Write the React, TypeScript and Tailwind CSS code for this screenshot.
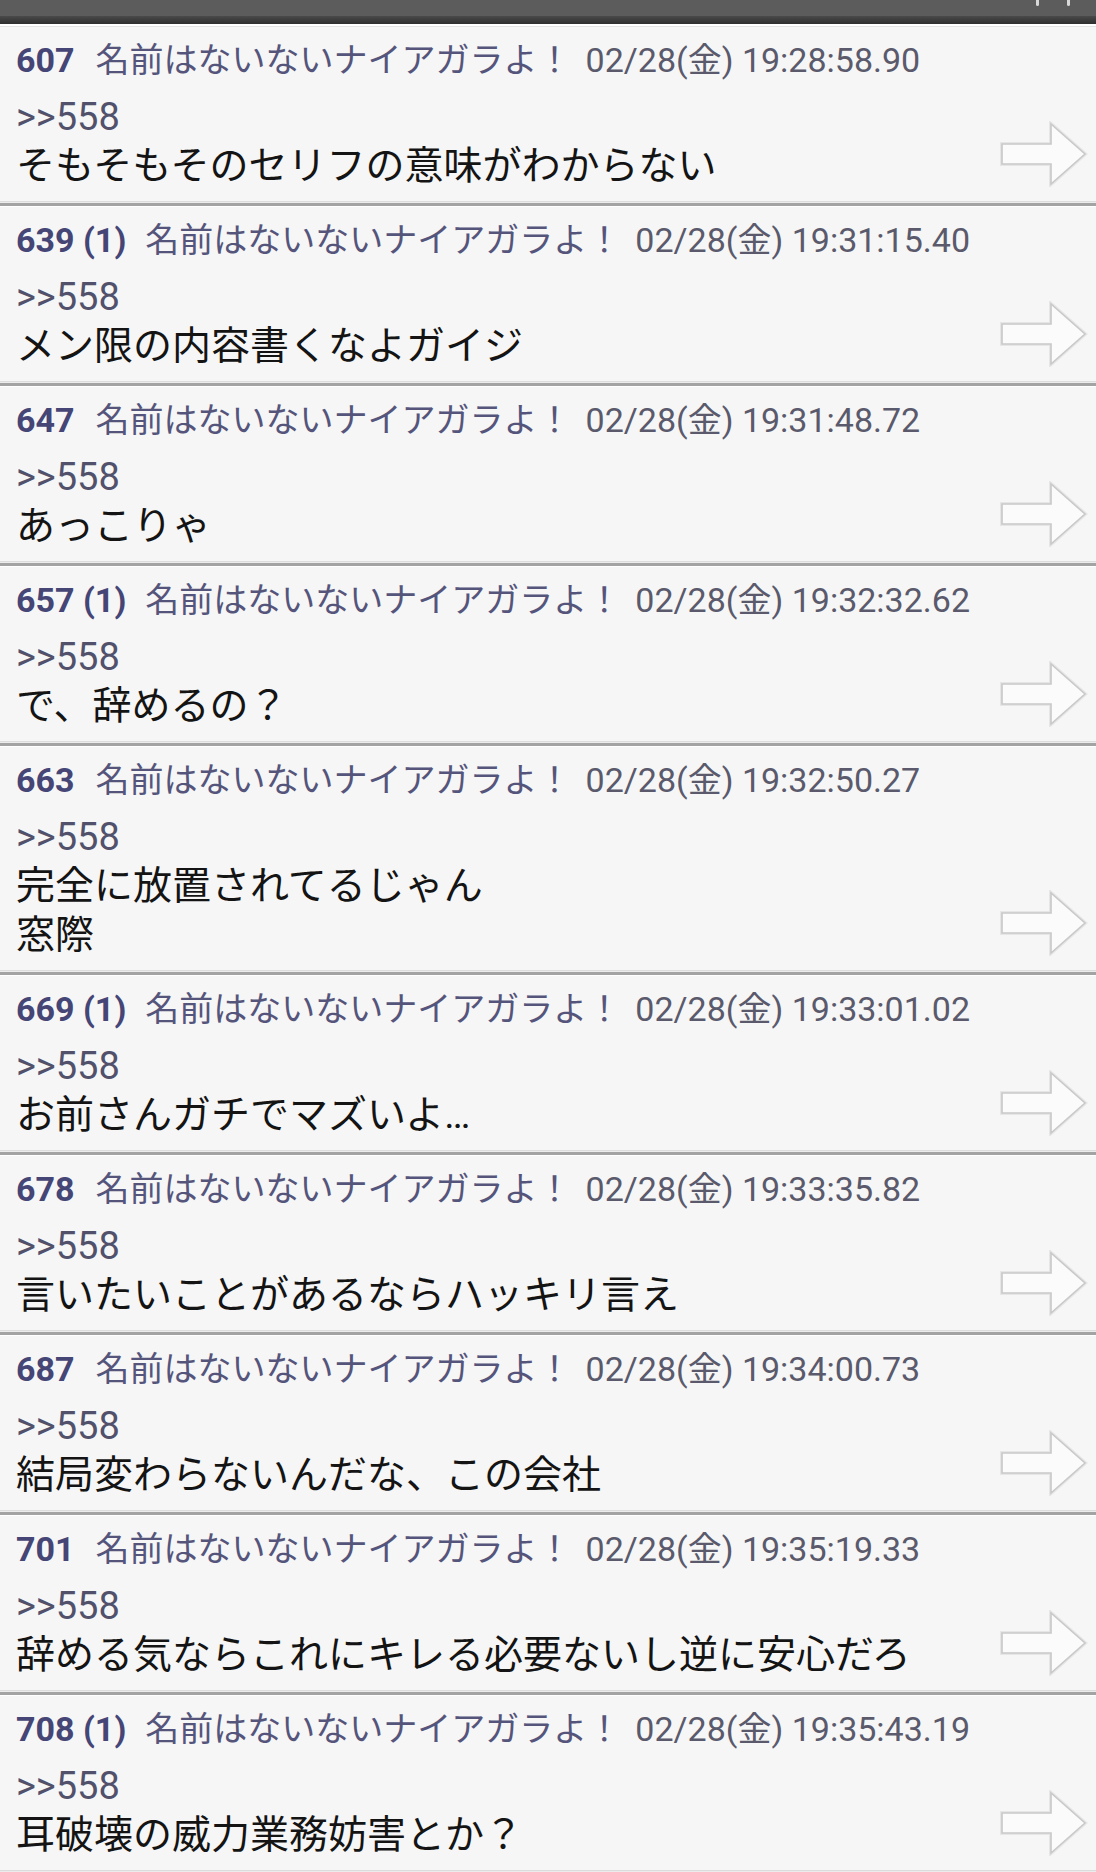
import React from "react";

type Post = {
  no: string;
  count?: string;
  time: string;
  lines: string[];
};

const posts: Post[] = [
  { no: "607", time: "19:28:58.90", lines: ["そもそもそのセリフの意味がわからない"] },
  { no: "639", count: "(1)", time: "19:31:15.40", lines: ["メン限の内容書くなよガイジ"] },
  { no: "647", time: "19:31:48.72", lines: ["あっこりゃ"] },
  { no: "657", count: "(1)", time: "19:32:32.62", lines: ["で、辞めるの？"] },
  { no: "663", time: "19:32:50.27", lines: ["完全に放置されてるじゃん", "窓際"] },
  { no: "669", count: "(1)", time: "19:33:01.02", lines: ["お前さんガチでマズいよ…"] },
  { no: "678", time: "19:33:35.82", lines: ["言いたいことがあるならハッキリ言え"] },
  { no: "687", time: "19:34:00.73", lines: ["結局変わらないんだな、この会社"] },
  { no: "701", time: "19:35:19.33", lines: ["辞める気ならこれにキレる必要ないし逆に安心だろ"] },
  { no: "708", count: "(1)", time: "19:35:43.19", lines: ["耳破壊の威力業務妨害とか？"] },
];

function Arrow() {
  return (
    <svg width="90" height="66" viewBox="0 0 90 66" className="shrink-0">
      <polygon
        points="3,23 52,23 52,3 86,33 52,63 52,43 3,43"
        fill="#fbfbfb"
        stroke="#e6e6e6"
        strokeWidth="4"
        strokeLinejoin="miter"
      />
      <polygon
        points="3,23 52,23 52,3 86,33 52,63 52,43 3,43"
        fill="#fbfbfb"
        stroke="#c9c9c9"
        strokeWidth="1.6"
        strokeLinejoin="miter"
      />
    </svg>
  );
}

function BodyLine({ text }: { text: string }) {
  if (text.endsWith("…")) {
    return (
      <div className="h-[49px] overflow-visible">
        {text.slice(0, -1)}
        <span className="leading-none" style={{ fontFamily: "Roboto, sans-serif" }}>
          …
        </span>
      </div>
    );
  }
  return <div className="h-[49px]">{text}</div>;
}

function Row({ p }: { p: Post }) {
  return (
    <div>
      <div className="flex items-end">
        <div className="flex-1 pl-[16px] pt-[13px] pb-[14px]">
          <div
            className="flex items-center h-[40px] whitespace-nowrap text-[34px] leading-[40px]"
            style={{ fontFamily: "Roboto, 'Noto Sans CJK JP', sans-serif" }}
          >
            <span className="font-bold text-[#454576]">
              {p.no}
              {p.count ? <span> {p.count}</span> : null}
            </span>
            <span className={(p.count ? "ml-[19px]" : "ml-[21px]") + " text-[#55557c]"}>
              名前はないないナイアガラよ！
            </span>
            <span className="ml-[14px] text-[#5a5a6c]">02/28(金) 19:{p.time.slice(3)}</span>
          </div>
          <div
            className="mt-[16px] h-[42px] text-[38px] leading-[42px] text-[#51516c]"
            style={{ fontFamily: "Roboto, sans-serif" }}
          >
            &gt;&gt;558
          </div>
          <div
            className="text-[39px] leading-[49px] text-[#141414] whitespace-nowrap"
            style={{ fontFamily: "'Noto Sans CJK JP', sans-serif" }}
          >
            {p.lines.map((l, i) => (
              <BodyLine key={i} text={l} />
            ))}
          </div>
        </div>
        <div className="mr-[7px] mb-[14px]">
          <Arrow />
        </div>
      </div>
      <div className="h-px bg-[#dcdcdc]" />
      <div className="h-px bg-[#ececec]" />
      <div className="h-[3px] bg-[#a3a3a3]" />
      <div className="h-px bg-white" />
    </div>
  );
}

export default function App() {
  return (
    <div className="w-[1096px] h-[1872px] overflow-hidden bg-[#f6f6f6]">
      <div className="h-[16px] bg-[#5c5c5c] flex justify-end items-start gap-[28px] pr-[26px]">
        <div className="w-[3px] h-[6px] rounded-b bg-[#d8d8d8]" />
        <div className="w-[3px] h-[6px] rounded-b bg-[#d8d8d8]" />
      </div>
      <div className="h-[8px] bg-gradient-to-b from-[#4a4a4a] to-[#2e2e2e]" />
      <div className="h-[2px] bg-white" />
      <div className="h-px bg-[#e4e4e4]" />
      {posts.map((p) => (
        <Row key={p.no} p={p} />
      ))}
    </div>
  );
}
